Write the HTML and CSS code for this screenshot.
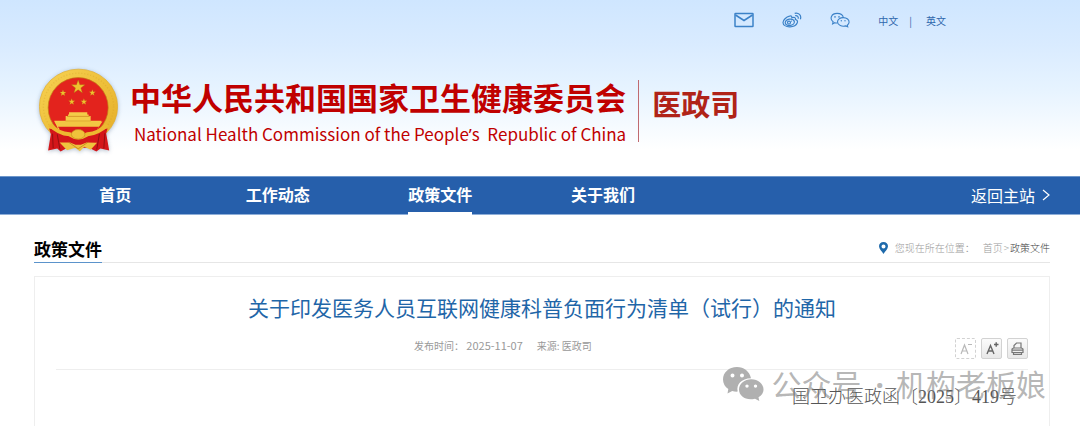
FILE: index.html
```html
<!DOCTYPE html>
<html lang="zh-CN">
<head>
  <meta charset="UTF-8">
  <meta name="viewport" content="width=device-width, initial-scale=1.0">
  <title>关于印发医务人员互联网健康科普负面行为清单（试行）的通知</title>
  <link rel="stylesheet" href="styles.css">
</head>
<body>
  <header class="header">
    <div class="top-links">
      <a href="#" class="top-icon" aria-label="邮箱">
        <svg width="20" height="16" viewBox="0 0 20 16" fill="none" stroke="#3c82c8" stroke-width="1.5">
          <rect x="1" y="1.5" width="18" height="13" rx="0.5"/>
          <path d="M1.5 3 L10 8.5 L18.5 3"/>
        </svg>
      </a>
      <a href="#" class="top-icon" aria-label="微博">
        <svg width="20" height="16" viewBox="0 0 20 16" fill="none" stroke="#3c82c8" stroke-width="1.2">
          <path d="M7.5 4.2 C8.8 3.4 10.2 3.8 9.8 5.8 C12 5 14 5.3 13.4 7.5 C15 8 16 9 15.3 10.8 C14.3 13.4 11 14.9 7.5 14.8 C4 14.7 1 13 1 10.4 C1 8.3 4.2 4.9 7.5 4.2 Z"/>
          <ellipse cx="7.8" cy="10.3" rx="4.6" ry="3.2" transform="rotate(-8 7.8 10.3)"/>
          <circle cx="7" cy="10.6" r="1.5"/>
          <path d="M9.2 9.2 h0.8"/>
          <path d="M12.7 1.3 C16.6 0.4 19.7 3.3 18.4 7.2"/>
          <path d="M13.2 3.7 C15.3 3.3 16.8 4.8 16.1 6.7"/>
        </svg>
      </a>
      <a href="#" class="top-icon" aria-label="微信">
        <svg width="20" height="16" viewBox="0 0 20 16" fill="none" stroke="#3c82c8" stroke-width="1.1">
          <path d="M7.3 11 C6.4 11.1 5.5 11 4.8 10.7 L2.6 11.9 L3.1 9.8 C-0.8 6.6 1.4 1.4 7.1 1.4 C10.6 1.4 13 3.3 13.3 5.6"/>
          <path d="M13.2 5.6 C17 5.6 19.2 7.8 19.1 10.2 C19 11.5 18.3 12.4 17.3 13.2 L17.7 14.8 L15.8 13.9 C12 15 7.6 13.3 7.5 10 C7.5 7.6 10 5.6 13.2 5.6 Z"/>
          <g fill="#3c82c8" stroke="none">
            <circle cx="5" cy="4.9" r="0.8"/><circle cx="9" cy="4.9" r="0.8"/>
            <circle cx="11.3" cy="8.7" r="0.7"/><circle cx="15" cy="8.7" r="0.7"/>
          </g>
        </svg>
      </a>
      <a href="#" class="lang">中文</a>
      <span class="lang-sep">|</span>
      <a href="#" class="lang">英文</a>
    </div>

    <div class="brand">
      <svg class="emblem" viewBox="27 27 240 252" aria-hidden="true">
        <defs>
          <linearGradient id="gold" x1="0" y1="0" x2="1" y2="1">
            <stop offset="0" stop-color="#f7d254"/>
            <stop offset="0.5" stop-color="#eec03a"/>
            <stop offset="1" stop-color="#e5ad2a"/>
          </linearGradient>
          <path id="star" d="M0 -10 L2.4 -3.2 L9.5 -3.1 L3.8 1.2 L5.9 8.1 L0 4 L-5.9 8.1 L-3.8 1.2 L-9.5 -3.1 L-2.4 -3.2 Z"/>
        </defs>
        <ellipse cx="147" cy="140" rx="116" ry="111" fill="url(#gold)" stroke="#e2ad2a" stroke-width="2"/>
        <ellipse cx="147" cy="140" rx="104" ry="99" fill="none" stroke="#c9901b" stroke-width="4" stroke-dasharray="3 6" opacity="0.25"/>
        <circle cx="146" cy="143" r="89" fill="#e3231d" stroke="#c08015" stroke-width="2"/>
        <g fill="#efc22f" stroke="#a4750e" stroke-width="0.5">
          <use href="#star" transform="translate(146 82) scale(2.1)"/>
          <use href="#star" transform="translate(101 100)"/>
          <use href="#star" transform="translate(188 99)"/>
          <use href="#star" transform="translate(127 126)"/>
          <use href="#star" transform="translate(163 126)"/>
        </g>
        <path fill="#f4cc48" d="M119 157 H173 V163 H177 V168 H183 V182 H215 L204 207 H87 L75 182 H109 V168 H116 V163 H119 Z"/>
        <path stroke="#c9851b" stroke-width="2" d="M113 169 H180 M108 183 H184"/>
        <path fill="#f2c743" d="M75 184 H218 L208 199 H86 Z"/>
        <path fill="#d91a1b" d="M86 200 H208 L196 216 H97 Z"/>
        <path fill="#d4161a" d="M60 205 Q98 212 119 226 L174 226 Q195 212 233 205 L229 220 L238 270 L212 264 L200 273 L178 262 L114 262 L94 273 L84 264 L57 270 L65 222 Z"/>
        <path fill="none" stroke="#941012" stroke-width="3" d="M70 220 L72 263 M84 222 L92 267 M225 219 L222 264 M209 221 L201 267"/>
        <path fill="none" stroke="#edb930" stroke-width="12" d="M62 194 Q88 220 120 222 Q146 240 174 222 Q206 219 232 194"/>
        <ellipse cx="146" cy="222" rx="20" ry="14" fill="#f0c23b" stroke="#c88c1e" stroke-width="2"/>
        <path fill="#efc33e" d="M91 246 L122 246 L138 253 L154 253 L171 246 L202 247 L183 268 L164 259 L151 272 L137 262 L113 269 Z"/>
        <path fill="none" stroke="#b87813" stroke-width="2" d="M117 245 L146 265 L176 245"/>
      </svg>
      <div class="brand-name">
        <div class="brand-cn">中华人民共和国国家卫生健康委员会</div>
        <div class="brand-en" lang="en">National Health Commission of the People<span class="apos">’</span>s&nbsp; Republic of China</div>
      </div>
      <div class="department">医政司</div>
    </div>
  </header>

  <nav class="nav">
    <a href="#" class="nav-item"><span>首页</span></a>
    <a href="#" class="nav-item"><span>工作动态</span></a>
    <a href="#" class="nav-item active"><span>政策文件</span></a>
    <a href="#" class="nav-item"><span>关于我们</span></a>
    <a href="#" class="nav-back">返回主站
      <svg width="8" height="12" viewBox="0 0 8 12" fill="none" stroke="#fff" stroke-width="1.2"><path d="M1 1 L7 6 L1 11"/></svg>
    </a>
  </nav>

  <main class="main">
    <div class="section-head">
      <h2>政策文件</h2>
      <div class="crumbs">
        <svg width="9" height="12" viewBox="0 0 9 12"><path fill="#1f6aab" fill-rule="evenodd" d="M4.5 0 C1.8 0 0 1.9 0 4.3 C0 7 3 9.5 4.5 12 C6 9.5 9 7 9 4.3 C9 1.9 7.2 0 4.5 0 Z M4.5 2.4 A2 2 0 1 1 4.5 6.4 A2 2 0 1 1 4.5 2.4 Z"/></svg>
        <span class="crumbs-label">您现在所在位置：</span>
        <a href="#">首页</a>
        <span class="crumbs-sep">&gt;</span>
        <a href="#" class="current">政策文件</a>
      </div>
    </div>

    <article class="article">
      <h1>关于印发医务人员互联网健康科普负面行为清单（试行）的通知</h1>
      <div class="info">
        <div class="source">
          <span>发布时间： <time datetime="2025-11-07">2025-11-07</time></span>
          <span>来源: 医政司</span>
        </div>
        <div class="tools">
          <button type="button" class="tool smaller" aria-label="缩小字体">
            <svg width="17" height="17" viewBox="0 0 17 17" fill="none" stroke="#b9b9b9" stroke-width="1.2"><path d="M4 14 L7.5 5 L11 14 M5.3 11 H9.7 M11 4.5 H15"/></svg>
          </button>
          <button type="button" class="tool" aria-label="放大字体">
            <svg width="17" height="17" viewBox="0 0 17 17" fill="none" stroke="#666" stroke-width="1.4"><path d="M4 14 L7.5 5.5 L11 14 M5.3 11 H9.7 M11 4.5 H15.5 M13.2 2.3 V6.7"/></svg>
          </button>
          <button type="button" class="tool" aria-label="打印">
            <svg width="17" height="17" viewBox="0 0 17 17" fill="none" stroke="#777" stroke-width="1.2"><path d="M5 8 V5.5 L7.5 3 H12 V8 M4.5 8 H12.5 L14 9 V12.5 H3 V9 Z M3 10.2 H14 M4.5 12.5 V14.4 H12.5 V12.5"/></svg>
          </button>
        </div>
      </div>
      <p class="doc-number">国卫办医政函〔2025〕419号</p>

      <div class="watermark">
        <svg width="42" height="36" viewBox="0 0 42 36" aria-hidden="true">
          <path fill="#b0b0b0" fill-rule="evenodd" d="M15 1 C6.8 1 1 6.5 1 13.5 C1 17.5 3 20.8 6.3 23 L5.5 27.5 L10.2 25 C12 25.6 14 25.7 15.7 25.6 C14 18.5 19.5 12.3 29 12.2 C27.5 5.5 22 1 15 1 Z M10.5 7.5 A2 2 0 1 1 10.5 11.5 A2 2 0 1 1 10.5 7.5 Z M20 7.5 A2 2 0 1 1 20 11.5 A2 2 0 1 1 20 7.5 Z"/>
          <path fill="#b0b0b0" fill-rule="evenodd" d="M29.3 13.2 C22.5 13.2 17 17.7 17 23.5 C17 30.5 24.5 34.9 33 32.7 L37.3 35 L36.5 31.3 C39.7 29.5 41.5 26.7 41.5 23.5 C41.5 17.7 36 13.2 29.3 13.2 Z M25 18.4 A1.7 1.7 0 1 1 25 21.8 A1.7 1.7 0 1 1 25 18.4 Z M33.5 18.4 A1.7 1.7 0 1 1 33.5 21.8 A1.7 1.7 0 1 1 33.5 18.4 Z"/>
        </svg>
        <span>公众号<span class="dot">·</span>机构老板娘</span>
      </div>
    </article>
  </main>
</body>
</html>
```

FILE: styles.css
```css
* {
  box-sizing: border-box;
}

body {
  margin: 0;
  min-height: 100vh;
  display: flex;
  flex-direction: column;
  font-family: "Noto Sans CJK SC", sans-serif;
  background: #fff;
}

a {
  color: inherit;
  text-decoration: none;
}

svg {
  display: block;
  flex: none;
}

.header {
  padding-bottom: 21px;
  background: linear-gradient(#cfe6ff 0%, #d9ebff 25%, #e6f3ff 50%, #fff 85%);
}

/* top bar */
.top-links {
  display: flex;
  align-items: center;
  justify-content: flex-end;
  height: 40px;
  padding-right: 134px;
  font-size: 10px;
  color: #2f67ad;
}

.top-icon {
  margin-right: 28px;
}

.lang-sep {
  margin: 0 14px 0 11px;
}

/* logo and names */
.brand {
  display: flex;
  align-items: center;
  padding: 27px 30px 0 38px;
}

.emblem {
  width: 81px;
  height: 88px;
  filter: drop-shadow(0 1px 2px rgba(0, 40, 90, 0.3));
}

.brand-name {
  padding: 6px 12px 0 11px;
  color: #c00000;
}

.brand-cn {
  font-size: 31px;
  line-height: 40px;
  font-weight: bold;
}

.brand-en {
  padding-left: 4px;
  font-size: 17px;
  line-height: 34px;
  white-space: nowrap;
}

.apos {
  font-family: "Noto Sans", sans-serif;
}

.department {
  height: 62px;
  padding-left: 13px;
  border-left: 1px solid #c06a70;
  font-size: 29px;
  line-height: 46px;
  font-weight: bold;
  color: #b02318;
}

/* main menu */
.nav {
  display: flex;
  height: 39px;
  padding: 0 30px 0 34px;
  border-top: 1px solid #6c96cb;
  border-bottom: 1px solid #8eaed8;
  background: #265fab;
  color: #fff;
  font-size: 16px;
  line-height: 34px;
}

.nav-item {
  width: 16%;
  text-align: center;
  font-weight: bold;
}

.nav-item span {
  display: inline-block;
  height: 38px;
}

.nav-item.active span {
  border-bottom: 3px solid #fff;
}

.nav-back {
  display: flex;
  align-items: center;
  gap: 7px;
  height: 35px;
  margin-left: auto;
}

.main {
  flex: 1;
  display: flex;
  flex-direction: column;
  padding: 20px 30px 0 34px;
}

.section-head {
  display: flex;
  justify-content: space-between;
  border-bottom: 1px solid #e6e6e6;
  line-height: 27px;
}

.section-head h2 {
  margin: 0 0 -1px;
  border-bottom: 1px solid #5b93cb;
  font-size: 17px;
  font-weight: bold;
  color: #000;
}

.crumbs {
  display: flex;
  align-items: center;
  height: 25px;
  font-size: 10px;
  font-weight: 300;
  color: #999;
}

.crumbs-label {
  margin: 0 8px 0 7px;
}

.crumbs-sep {
  margin: 0 1px;
}

.crumbs .current {
  color: #444;
}

/* article box */
.article {
  position: relative;
  flex: 1;
  margin-top: 13px;
  padding: 14px 21px 0;
  border: 1px solid #eee;
  border-bottom: 0;
}

.article h1 {
  margin: 0;
  font-size: 21px;
  line-height: 32px;
  font-weight: normal;
  text-align: center;
  color: #1f66a8;
}

.info {
  display: grid;
  grid-template-columns: 1fr auto 1fr;
  height: 47px;
  border-bottom: 1px solid #eee;
}

.source {
  grid-column: 2;
  display: flex;
  align-items: baseline;
  gap: 14px;
  margin-right: 78px;
  font-size: 10px;
  line-height: 44px;
  color: #999;
}

.source time {
  font-size: 11px;
}

.tools {
  display: flex;
  justify-content: flex-end;
  gap: 5px;
  padding-top: 15px;
}

.tool {
  width: 21px;
  height: 21px;
  padding: 1px;
  border: 1px solid #d2d2d2;
  border-radius: 2px;
  background: linear-gradient(#fbfbfb, #e8e8e8);
  cursor: pointer;
}

.tool.smaller {
  border-style: dashed;
  background: #fff;
}

.doc-number {
  margin: 14px 11px 0 0;
  font-family: "Liberation Serif", "Noto Sans CJK SC", serif;
  font-size: 18px;
  line-height: 27px;
  font-weight: 300;
  text-align: right;
  color: #555;
}

.watermark {
  position: absolute;
  top: 86px;
  right: 3px;
  display: flex;
  align-items: center;
  gap: 8px;
  font-size: 30px;
  line-height: 40px;
  color: rgba(120, 120, 120, 0.55);
}

.watermark .dot {
  margin: 0 12px 0 14px;
  font-family: "Noto Sans", sans-serif;
  font-weight: bold;
}
```
